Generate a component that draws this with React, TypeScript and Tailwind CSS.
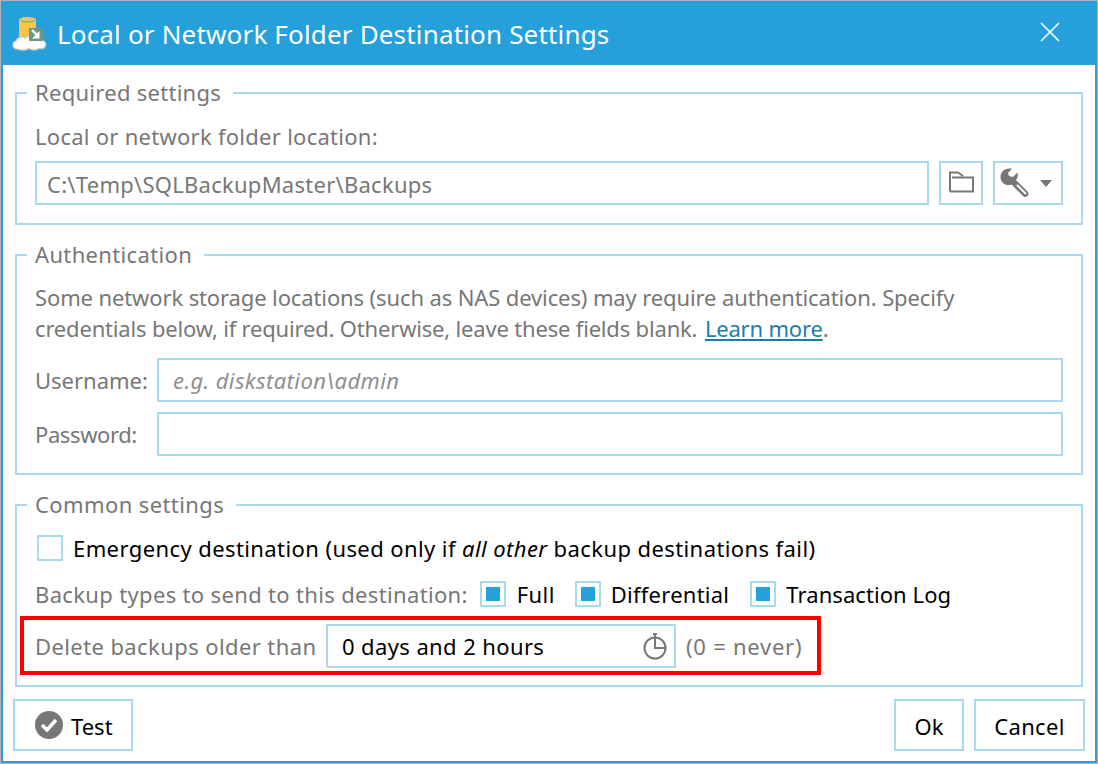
const font = { fontFamily: '"Noto Sans", "Open Sans", sans-serif' };

function Group({ title, legend, className, children }: { title: string; legend: string; className: string; children: React.ReactNode }) {
  return (
    <div className={`relative mx-3 border-2 border-[#a8d9ef] ${className}`}>
      {/* legend sits on top of the group border */}
      <span className={`absolute -top-[17px] left-[10px] bg-white pl-2 pr-3 text-[22px] leading-[30px] text-[#777777] ${legend}`}>
        {title}
      </span>
      {children}
    </div>
  );
}

function Check({ checked = false }: { checked?: boolean }) {
  return (
    <span className="flex h-[26px] w-[26px] shrink-0 items-center justify-center border-2 border-[#a8d9ef] bg-white">
      {checked && <span className="h-[14px] w-[14px] bg-[#26a0da]"></span>}
    </span>
  );
}

function AppIcon() {
  return (
    <svg width="36" height="36" viewBox="0 0 36 36">
      <path d="M7 5 C7 1 24 1 24 5 L24 24 L7 24 Z" fill="#fcc54a" />
      <path d="M8.5 5 C11 7.5 20 7.5 23 5" fill="none" stroke="#3f9bd5" strokeWidth="1" />
      <path
        d="M5 34 C0 34 -0.5 27 4 26 C5 22 10 21 13 23 C17 20 24 21 26 25 C31 24 35 27 33.5 31 C32.5 34 29 34 27 33.5 C24 35.5 20 35.5 17 33.5 C14 35.5 9 35.5 5 34 Z"
        fill="#ffffff"
        stroke="#c4c4c4"
        strokeWidth="1.2"
      />
      <rect x="17" y="13" width="14" height="13" fill="#6a9a86" />
      <path d="M20 15 L26 21" fill="none" stroke="#ffffff" strokeWidth="2.4" />
      <path d="M27.5 16 L27.5 23.5 L20 23.5 Z" fill="#ffffff" />
    </svg>
  );
}

export default function App() {
  return (
    <div className="h-[764px] w-[1098px] border border-[#b4b4b4] bg-[#26a0da]" style={font}>
      <div className="flex h-full flex-col border-2 border-[#26a0da] border-t-0 bg-white text-[22px] text-[#777777]">
        {/* Title bar */}
        <div className="flex h-[64px] shrink-0 items-center bg-[#26a0da] pl-[9px] pr-[34px] text-white">
          <AppIcon />
          <span className="ml-[9px] mt-[3px] text-[26px] tracking-[0.17px]">
            Local or Network Folder Destination Settings
          </span>
          <svg className="-mt-[2px] ml-auto" width="22" height="22" viewBox="0 0 22 22">
            <path d="M2 2 L20 20 M20 2 L2 20" stroke="#ffffff" strokeWidth="1.6" fill="none" />
          </svg>
        </div>

        {/* Required settings */}
        <Group title="Required settings" legend="tracking-[0.28px]" className="mt-[27px] h-[133px] shrink-0 px-[18px]">
          <div className="mt-[27px] leading-[30px] tracking-[0.27px]">Local or network folder location:</div>
          <div className="mt-[10px] flex gap-[10px]">
            <div className="flex h-[44px] w-[894px] items-center border-2 border-[#a8d9ef] pl-[10px] pt-[2px] tracking-[0.26px]">
              C:\Temp\SQLBackupMaster\Backups
            </div>
            <button className="flex h-[44px] w-[44px] items-center justify-center border-2 border-[#a8d9ef]">
              <svg width="26" height="24" viewBox="0 0 26 24">
                <path
                  d="M2 20.5 V1.5 H10 L15 5 M4 6.5 H25 V20.5 H2"
                  fill="none"
                  stroke="#777777"
                  strokeWidth="2"
                />
              </svg>
            </button>
            <button className="flex h-[44px] w-[70px] items-center border-2 border-[#a8d9ef] pl-[5px]">
              <svg width="30" height="30" viewBox="0 0 30 30">
                <path
                  d="M12 0.8 C6 -0.5 0.5 3 0.5 9 C0.5 15 6 18.5 11.5 16.5 L23 28 Q25 30 27.5 28 Q29.5 25.5 27.5 23.5 L16 12 C18 9 18 7 17.5 4.5 L13 9 L9 8 L8 5 Z"
                  fill="#777777"
                />
                <path d="M17 17 L26 26" stroke="#ffffff" strokeWidth="2" />
              </svg>
              <svg className="ml-[10px]" width="12" height="7" viewBox="0 0 12 7">
                <path d="M0 0 L12 0 L6 7 Z" fill="#777777" />
              </svg>
            </button>
          </div>
        </Group>

        {/* Authentication */}
        <Group title="Authentication" legend="tracking-[0.35px]" className="mt-[29px] h-[221px] shrink-0 px-[18px]">
          <div className="mt-[26px] whitespace-nowrap leading-[31px]">
            <div className="tracking-[-0.12px]">
              Some network storage locations (such as NAS devices) may require authentication. Specify
            </div>
            <div className="tracking-[-0.18px]">
              credentials below, if required. Otherwise, leave these fields blank.{" "}
              <span className="ml-[2px] text-[#1a7fa8] underline">Learn more</span>.
            </div>
          </div>
          <div className="mt-[14px] flex items-center">
            <span className="w-[122px]">Username:</span>
            <div className="flex h-[44px] w-[906px] items-center border-2 border-[#a8d9ef] pl-[14px] italic tracking-[0.4px] text-[#8f8f8f]">
              e.g. diskstation\admin
            </div>
          </div>
          <div className="mt-[10px] flex items-center">
            <span className="w-[122px] tracking-[-0.4px]">Password:</span>
            <div className="h-[44px] w-[906px] border-2 border-[#a8d9ef]"></div>
          </div>
        </Group>

        {/* Common settings */}
        <Group title="Common settings" legend="tracking-[0.4px]" className="mt-[29px] h-[183px] shrink-0">
          <div className="ml-[20px] mt-[27px] flex items-center gap-[10px] leading-[30px] text-black">
            <Check />
            <span className="tracking-[0.41px]">
              Emergency destination (used only if <i>all other</i> backup destinations fail)
            </span>
          </div>
          <div className="ml-[18px] mt-[16px] flex items-center leading-[30px]">
            <span className="tracking-[0.34px]">Backup types to send to this destination:</span>
            <span className="ml-[12px] flex items-center gap-[11px] tracking-[0.4px] text-black">
              <Check checked />
              Full
            </span>
            <span className="ml-[20px] flex items-center gap-[10px] tracking-[0.25px] text-black">
              <Check checked />
              Differential
            </span>
            <span className="ml-[21px] flex items-center gap-[10px] tracking-[0.07px] text-black">
              <Check checked />
              Transaction Log
            </span>
          </div>
          <div className="ml-[3px] mt-[7px] flex h-[59px] w-[801px] items-center border-4 border-[#ff0000] pl-[11px]">
            <span className="w-[291px] shrink-0 pt-[2px] tracking-[0.4px]">Delete backups older than</span>
            <div className="flex h-[44px] w-[350px] shrink-0 items-center justify-between border-2 border-[#a8d9ef] pl-[14px] pr-[7px] tracking-[0.39px] text-black">
              <span className="pt-[2px]">0 days and 2 hours</span>
              <svg width="24" height="28" viewBox="0 0 24 28">
                <circle cx="12" cy="16" r="10.5" fill="none" stroke="#777777" strokeWidth="2" />
                <path d="M12 2 L12 16 L22 16 M10 2 L14 2" fill="none" stroke="#777777" strokeWidth="2" />
              </svg>
            </div>
            <span className="ml-[10px] whitespace-nowrap pt-[2px] tracking-[0.75px]">(0 = never)</span>
          </div>
        </Group>

        {/* Footer buttons */}
        <div className="mt-[12px] flex px-[10px] text-black">
          <button className="flex h-[52px] w-[120px] items-center border-2 border-[#a8d9ef] pl-[20px]">
            <svg width="28" height="28" viewBox="0 0 28 28">
              <circle cx="14" cy="14" r="14" fill="#777777" />
              <path d="M7 14 L12 19 L21 9" fill="none" stroke="#ffffff" strokeWidth="3.5" />
            </svg>
            <span className="ml-[8px] pt-[2px]">Test</span>
          </button>
          <button className="ml-auto h-[52px] w-[70px] border-2 border-[#a8d9ef] pt-[2px]">Ok</button>
          <button className="ml-[10px] h-[52px] w-[111px] border-2 border-[#a8d9ef] pt-[2px] tracking-[0.3px]">
            Cancel
          </button>
        </div>
      </div>
    </div>
  );
}
